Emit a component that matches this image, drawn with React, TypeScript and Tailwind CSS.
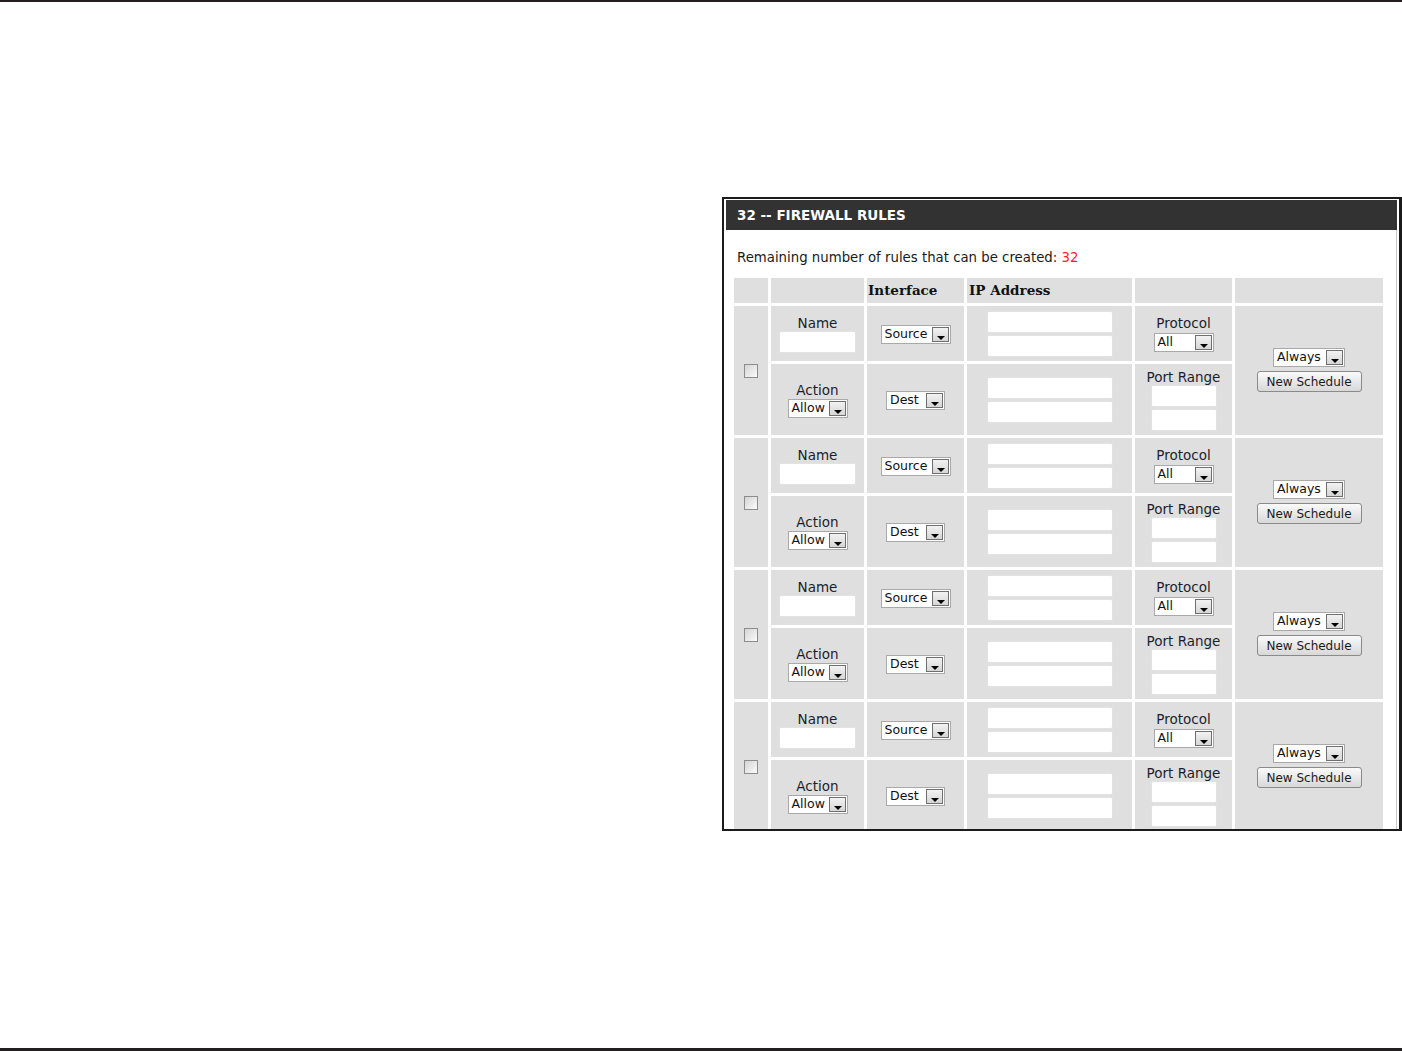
import React from "react";

const sans = "font-['DejaVu_Sans',sans-serif]";

function FakeSelect({ label, width }: { label: string; width: string }) {
    return (
        <div className={`inline-flex h-[19px] items-stretch border border-[#a9a9a9] bg-white align-middle ${width}`}>
            <span className="flex flex-1 items-center pl-[3px] text-[12.5px] leading-none text-[#111]">{label}</span>
            <span className="relative m-px w-[17px] border border-[#6f6f6f] bg-gradient-to-b from-[#f2f2f2] to-[#d6d6d6]">
                <span className="absolute left-[4px] top-[8px] h-0 w-0 border-x-[4px] border-t-[4px] border-x-transparent border-t-black" />
            </span>
        </div>
    );
}

function TextBox({ width }: { width: string }) {
    return <div className={`h-[22px] rounded-[2px] border border-[#e2e2e2] bg-white ${width}`} />;
}

function Label({ children }: { children: React.ReactNode }) {
    return <div className="h-[16px] text-[13.5px] leading-[16px] text-[#1d1d2b]">{children}</div>;
}

function RuleRows() {
    return (
        <>
            <tr>
                <td rowSpan={2} className="bg-[#dfdfdf] p-0 align-middle">
                    <div className="mx-auto h-[14px] w-[14px] border border-[#8c8c8c] bg-gradient-to-br from-[#d4d4d4] to-[#fbfbfb]" />
                </td>
                <td className="h-[55px] bg-[#dfdfdf] p-0 text-center align-middle">
                    <Label>Name</Label>
                    <div className="flex justify-center">
                        <TextBox width="w-[77px]" />
                    </div>
                </td>
                <td className="bg-[#dfdfdf] p-0 text-center align-middle">
                    <FakeSelect label="Source" width="w-[70px]" />
                </td>
                <td className="bg-[#dfdfdf] p-0 align-middle">
                    <div className="flex flex-col items-center gap-[2px]">
                        <TextBox width="w-[126px]" />
                        <TextBox width="w-[126px]" />
                    </div>
                </td>
                <td className="bg-[#dfdfdf] p-0 text-center align-middle">
                    <Label>Protocol</Label>
                    <div className="mt-[2px] flex justify-center">
                        <FakeSelect label="All" width="w-[60px]" />
                    </div>
                </td>
                <td rowSpan={2} className="bg-[#dfdfdf] p-0 pb-[4px] text-center align-middle">
                    <FakeSelect label="Always" width="w-[72px]" />
                    <div className="mt-[2px] flex justify-center">
                        <button className="h-[21px] w-[105px] rounded-[3px] border border-[#8a8a8a] bg-gradient-to-b from-[#fafafa] to-[#d8d8d8] text-[12px] leading-none text-[#1a1a1a]">
                            New Schedule
                        </button>
                    </div>
                </td>
            </tr>
            <tr>
                <td className="h-[71px] bg-[#dfdfdf] p-0 text-center align-middle">
                    <Label>Action</Label>
                    <div className="mt-px flex justify-center">
                        <FakeSelect label="Allow" width="w-[60px]" />
                    </div>
                </td>
                <td className="bg-[#dfdfdf] p-0 text-center align-middle">
                    <FakeSelect label="Dest" width="w-[59px]" />
                </td>
                <td className="bg-[#dfdfdf] p-0 align-middle">
                    <div className="flex flex-col items-center gap-[2px]">
                        <TextBox width="w-[126px]" />
                        <TextBox width="w-[126px]" />
                    </div>
                </td>
                <td className="bg-[#dfdfdf] p-0 text-center align-middle">
                    <Label>Port Range</Label>
                    <div className="flex flex-col items-center gap-[2px]">
                        <TextBox width="w-[66px]" />
                        <TextBox width="w-[66px]" />
                    </div>
                </td>
            </tr>
        </>
    );
}

export default function App() {
    return (
        <div className={`flex h-[1051px] w-full flex-col bg-white ${sans}`}>
            <div className="h-[2px] bg-[#231f20]" />

            <div className="flex-1 pl-[722px] pt-[195px]">
                {/* Firewall rules panel */}
                <div className="h-[634px] w-[680px] overflow-hidden border-2 border-r-[3px] border-[#1b1b1b] bg-white pl-[2px] pr-[2px] pt-px">
                    <div className="flex h-[30px] items-center bg-[#323232] pl-[11px] pt-px text-[13.5px] font-bold text-white">
                        32 -- FIREWALL RULES
                    </div>
                    <div className="h-full border-r border-[#c8c8c8] pl-[5px]">
                        <div className="pl-[6px] pt-[19px] text-[13.3px] leading-[18px] text-[#1a1a1a]">
                            Remaining number of rules that can be created: <span className="text-[#ff1f1f]">32</span>
                        </div>
                        <table className="mt-[8px] w-[655px] table-fixed border-separate border-spacing-[3px]">
                            <thead>
                                <tr className="font-['DejaVu_Serif',serif] text-[13.5px] font-bold text-[#111]">
                                    <th className="h-[25px] w-[34px] bg-[#dfdfdf] p-0" />
                                    <th className="w-[93px] bg-[#dfdfdf] p-0" />
                                    <th className="w-[97px] bg-[#dfdfdf] p-0 pl-px text-left">Interface</th>
                                    <th className="w-[165px] bg-[#dfdfdf] p-0 pl-[2px] text-left">IP Address</th>
                                    <th className="w-[97px] bg-[#dfdfdf] p-0" />
                                    <th className="w-[148px] bg-[#dfdfdf] p-0" />
                                </tr>
                            </thead>
                            <tbody>
                                <RuleRows />
                                <RuleRows />
                                <RuleRows />
                                <RuleRows />
                            </tbody>
                        </table>
                    </div>
                </div>
            </div>

            <div className="h-[3px] bg-[#231f20]" />
        </div>
    );
}
